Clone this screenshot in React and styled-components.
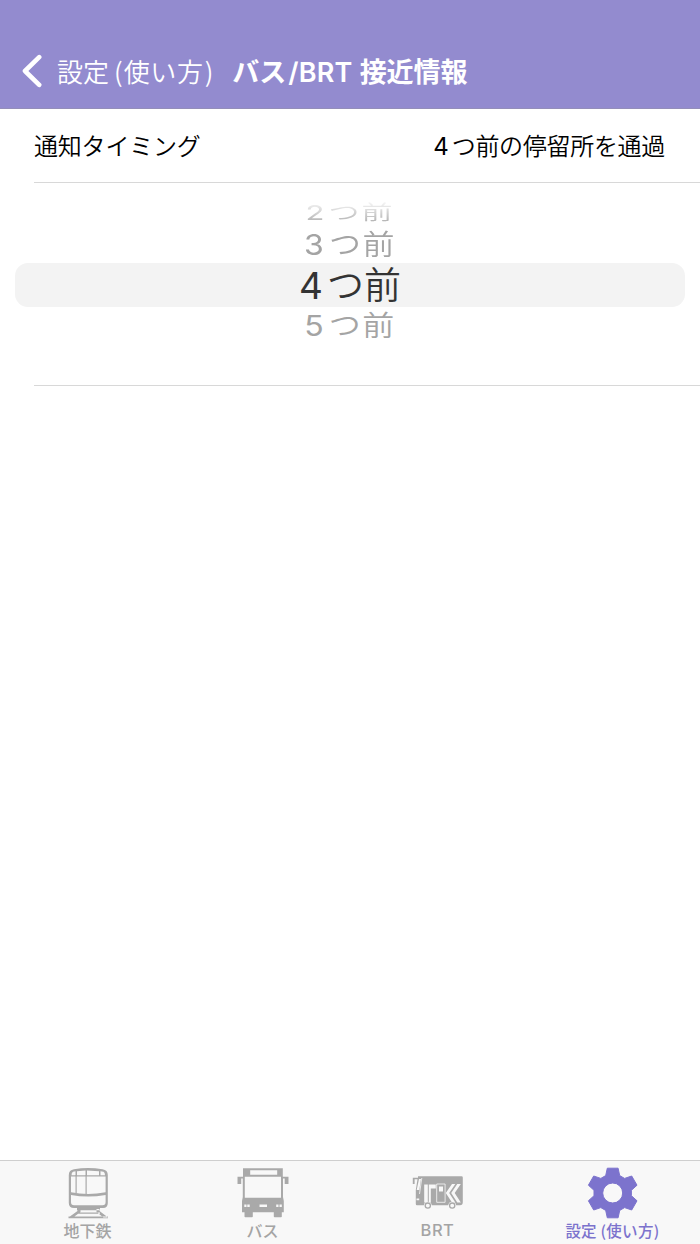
import React from "react";
import styled, { createGlobalStyle } from "styled-components";

const GlobalStyle = createGlobalStyle`
  * { box-sizing: border-box; }
  body { margin: 0; background: #fff; font-family: Inter, "Noto Sans CJK JP", sans-serif; }
`;

const Screen = styled.div`
  display: flex;
  flex-direction: column;
  width: 700px;
  height: 1244px;
  background: #fff;
  overflow: hidden;
`;

const Header = styled.header`
  display: flex;
  align-items: flex-start;
  height: 109px;
  padding: 51px 0 0 22px;
  background: #938bcf;
  color: #fff;
  border-bottom: 1px solid #948eb9;
`;

const BackIcon = styled.svg`
  width: 20px;
  height: 34px;
  margin-top: 3px;
  margin-right: 15px;
`;

const Line = styled.span`
  display: flex;
  align-items: baseline;
  white-space: pre;
  font-size: ${(p) => p.$size}px;
  font-weight: ${(p) => p.$weight || 400};
  line-height: ${(p) => p.$height || 40}px;
`;

const Run = styled.span`
  letter-spacing: ${(p) => p.$track || 0}px;
  margin-left: ${(p) => p.$gap || 0}px;
  font-weight: ${(p) => p.$weight || "inherit"};
  font-family: ${(p) => (p.$cjk ? '"Noto Sans CJK JP", sans-serif' : 'Inter, "Noto Sans CJK JP", sans-serif')};
`;

const SettingRow = styled.div`
  display: flex;
  justify-content: space-between;
  height: 74px;
  margin-left: 34px;
  padding: 16px 35px 0 0;
  border-bottom: 1px solid #d8d8d8;
  color: #000;
`;

const Picker = styled.div`
  display: flex;
  flex-direction: column;
  align-items: center;
  height: 202px;
  padding-top: 19px;
`;

const Option = styled.div`
  display: flex;
  justify-content: center;
  align-items: center;
  width: 100%;
  height: ${(p) => p.$h}px;
  color: #a4a4a4;
`;

const FadedOption = styled(Option)`
  mask-image: linear-gradient(to bottom, rgba(0, 0, 0, 0.1) 0, rgba(0, 0, 0, 0.9) 100%);
`;

const SelectedOption = styled(Option)`
  width: 670px;
  border-radius: 13px;
  background: #f3f3f3;
  color: #333;
`;

const Squash = styled.div`
  transform: translateY(${(p) => p.$dy || 0}px) scaleY(${(p) => p.$y});
`;

const Divider = styled.div`
  height: 1px;
  margin-left: 34px;
  background: #d8d8d8;
`;

const Spacer = styled.div`
  flex: 1;
`;

const TabBar = styled.nav`
  display: grid;
  grid-template-columns: repeat(4, 1fr);
  height: 84px;
  border-top: 1px solid #cfcfcf;
  background: #f8f8f8;
`;

const Tab = styled.div`
  display: flex;
  flex-direction: column;
  align-items: center;
  padding-top: 5px;
  color: ${(p) => (p.$active ? "#7c73cd" : "#a4a4a4")};
`;

const IconBox = styled.div`
  display: flex;
  align-items: center;
  justify-content: center;
  width: 56px;
  height: 54px;
`;

const TabLabel = styled(Line)`
  margin-top: -1px;
`;

const Subway = () => (
  <svg width="56" height="54" viewBox="0 0 56 54" fill="#a9a9a9">
    <path fillRule="evenodd" d="M14 3.200Q28 1 42.500 3.200Q47.800 4 47.800 9V37Q47.800 42 43 42H14Q8.800 42 8.800 37V9Q8.800 4 14 3.200ZM13 5.800Q11.500 6.500 11.500 9.300H15.500V5.300ZM17 5.200V9.300H25.500V4.600ZM27 4.600V9.300H39V5.200ZM40.500 5.300V9.300H45Q45 6.500 43.500 5.800ZM11 10.500V26.300Q28 29.500 45.600 26.300V10.500ZM11 29V36Q11 39.300 14 39.300H42.500Q45.600 39.300 45.600 36V29Q28 32 11 29Z" />
    <path d="M15.500 9H16.700V27H15.500ZM25.500 9H26.700V28H25.500Z" />
    <path d="M17 42H40V44.300H17ZM17 46.500H40V47.800H17ZM8.500 50.500H48V52.300H8.500ZM17.500 43H20.500V46L13 51.500H8.500L17.500 45ZM39.500 43H36.500V46L43.500 51.500H48L39.500 45Z" />
  </svg>
);

const Bus = () => (
  <svg width="56" height="54" viewBox="0 0 56 54" fill="#a9a9a9">
    <path fillRule="evenodd" d="M8 2.300H47.800V10.700H53.500V18H49.700V12.500H48V31L48.800 35V46.300H46.800V50.500Q46.800 51.300 46 51.300H39.600Q38.800 51.300 38.800 50.500V46.300H17.800V50.500Q17.800 51.300 17 51.300H10.300Q9.500 51.300 9.500 50.500V46.300H7V35L7.800 31V12.500H6.200V18H2.500V10.700H8ZM15.200 4.300V8.700H42.200V4.300ZM9.800 10.700V31.700H46V10.700Z" />
    <path fill="#f8f8f8" d="M9.300 38.500H11.500V41H9.300ZM12.300 38.500H14.700V41H12.300ZM24.500 38.500H32V41H24.500ZM41.200 38.500H43.500V41H41.200ZM44.500 38.500H46.800V41H44.500Z" />
  </svg>
);

const Brt = () => (
  <svg width="56" height="54" viewBox="0 0 56 54">
    <path fill="#a9a9a9" d="M8 10.300H51.500Q52.800 10.300 52.800 11.500V36Q52.800 39.300 50 39.300H7Q5.800 39.300 5.800 38V24L7.500 13.300H4.600V18H2.800V11.800H8Z" />
    <path fill="#f8f8f8" d="M9 13H11L9.300 24H6.700ZM14.200 18.500H17.800V36.500H14.200ZM18.800 18.500H25.800V22.500H20.800V36.500H18.800ZM29 20.500H33V25.500H29ZM42 18H45.300L39.200 27L45.300 36.500H42L35.800 27ZM47.300 18H50.800L44.700 27L50.800 36.500H47.300L41.200 27ZM6.500 32.500H9.200V34.200H6.500Z" />
    <path fill="none" stroke="#f8f8f8" strokeWidth=".8" d="M26.700 36.300V18H35.100V36.300ZM11.800 12L9.500 28" />
    <circle cx="17.800" cy="39.600" r="3.900" fill="#f8f8f8" />
    <circle cx="42.200" cy="39.600" r="3.900" fill="#f8f8f8" />
    <circle cx="17.800" cy="39.600" r="2.600" fill="#f8f8f8" stroke="#a9a9a9" strokeWidth="1.300" />
    <circle cx="42.200" cy="39.600" r="2.600" fill="#f8f8f8" stroke="#a9a9a9" strokeWidth="1.300" />
  </svg>
);

const Gear = () => (
  <svg width="56" height="54" viewBox="0 0 56 54">
    <path
      fill="#7c73cd"
      fillRule="evenodd"
      stroke="#7c73cd"
      strokeWidth="1"
      strokeLinejoin="round"
      d="M22.300 2.200H33.100L34.700 9.600L39.600 12.400L46.700 10L52 19.200L46.400 24.300V29.700L52 34.800L46.700 44L39.600 41.600L34.700 44.400L33.100 51.800H22.300L20.700 44.400L15.800 41.600L8.700 44L3.400 34.800L9 29.700V24.300L3.400 19.200L8.700 10L15.800 12.400L20.700 9.600ZM27.700 17A10 10 0 1 0 27.700 37A10 10 0 1 0 27.700 17Z"
    />
  </svg>
);

const PickerText = ({ n, size, gap, track }) => (
  <Line $size={size} $height={40}>
    <Run>{n}</Run>
    <Run $cjk $gap={gap} $track={track} $weight={350}>つ前</Run>
  </Line>
);

export default function App() {
  return (
    <Screen>
      <GlobalStyle />
      <Header>
        <BackIcon viewBox="0 0 20 34" fill="none" stroke="#fff" strokeWidth="4.600" strokeLinecap="round" strokeLinejoin="round">
          <path d="M17.200 3.200L3 17L17.200 30.800" />
        </BackIcon>
        <Line $size={26} $weight={350}>
          <Run $cjk>設定</Run>
          <Run $cjk $gap={5}>(</Run>
          <Run $cjk $gap={1} $track={0.700}>使い方</Run>
          <Run $cjk $gap={1}>)</Run>
        </Line>
        <Line $size={27} $weight={600}>
          <Run $cjk $gap={19}>バス</Run>
          <Run $gap={2} $track={0.200}>/BRT</Run>
          <Run $cjk $gap={7}>接近情報</Run>
        </Line>
      </Header>
      <SettingRow>
        <Line $size={24} $weight={350}>
          <Run $cjk $track={-0.200}>通知タイミング</Run>
        </Line>
        <Line $size={24} $weight={350}>
          <Run $weight={400}>4</Run>
          <Run $cjk $gap={3} $track={-0.300}>つ前の停留所を通過</Run>
        </Line>
      </SettingRow>
      <Picker>
        <FadedOption $h={22}>
          <Squash $y={0.65} $dy={-1}><PickerText n="2" size={31} gap={4} track={2} /></Squash>
        </FadedOption>
        <Option $h={39}>
          <Squash $y={0.9}><PickerText n="3" size={32} gap={5} track={1.5} /></Squash>
        </Option>
        <SelectedOption $h={44}>
          <Squash $y={1} $dy={-1}><PickerText n="4" size={37} gap={4} track={0} /></Squash>
        </SelectedOption>
        <Option $h={36}>
          <Squash $y={0.9} $dy={-1}><PickerText n="5" size={32} gap={5} track={1.5} /></Squash>
        </Option>
      </Picker>
      <Divider />
      <Spacer />
      <TabBar>
        <Tab>
          <IconBox><Subway /></IconBox>
          <TabLabel $size={16} $weight={500} $height={22}><Run $cjk>地下鉄</Run></TabLabel>
        </Tab>
        <Tab>
          <IconBox><Bus /></IconBox>
          <TabLabel $size={16} $weight={500} $height={22}><Run $cjk>バス</Run></TabLabel>
        </Tab>
        <Tab>
          <IconBox><Brt /></IconBox>
          <TabLabel $size={16.500} $weight={500} $height={22}><Run $track={0.500}>BRT</Run></TabLabel>
        </Tab>
        <Tab $active>
          <IconBox><Gear /></IconBox>
          <TabLabel $size={15.500} $weight={500} $height={22}>
            <Run $cjk>設定</Run>
            <Run $cjk $gap={4} $track={0.300}>(使い方)</Run>
          </TabLabel>
        </Tab>
      </TabBar>
    </Screen>
  );
}
